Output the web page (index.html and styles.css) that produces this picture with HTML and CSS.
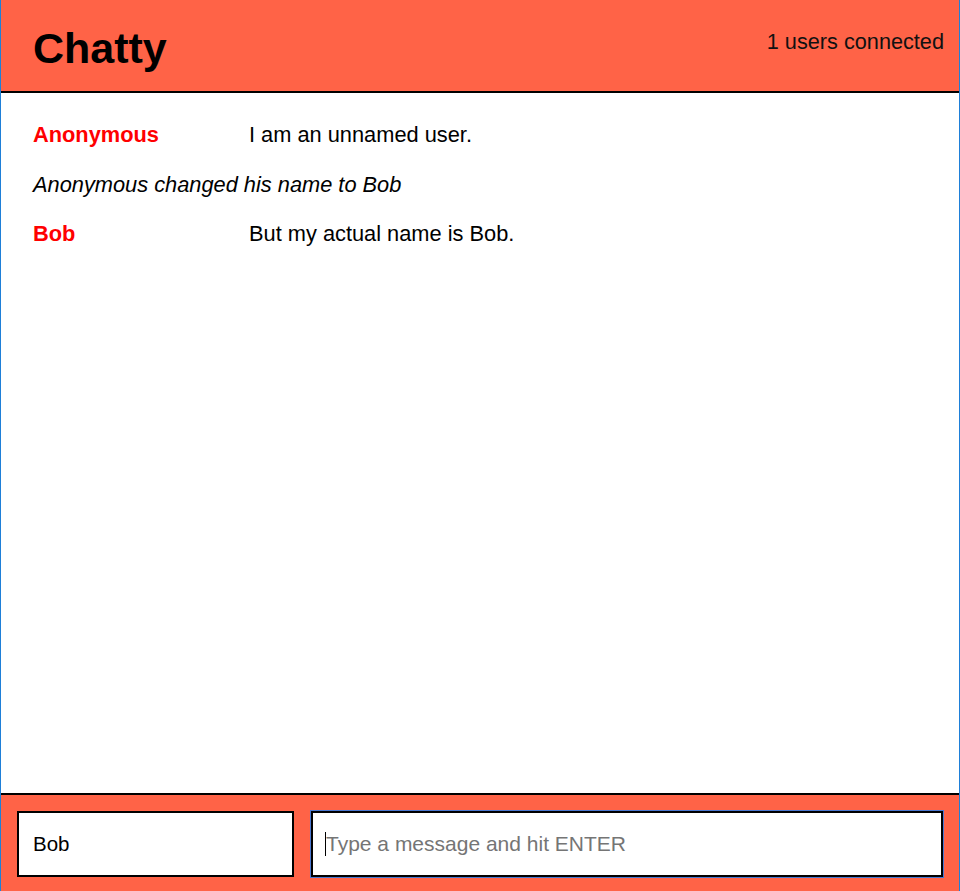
FILE: index.html
```html
<!DOCTYPE html>
<html>
<head>
<meta charset="utf-8">
<title>Chatty</title>
<link rel="stylesheet" href="styles.css">
</head>
<body>
<div class="app">
  <nav class="navbar">
    <span class="brand">Chatty</span>
    <span class="count">1 users connected</span>
  </nav>
  <main class="messages">
    <div class="message">
      <span class="username">Anonymous</span>
      <span class="content">I am an unnamed user.</span>
    </div>
    <div class="message system">Anonymous changed his name to Bob</div>
    <div class="message">
      <span class="username">Bob</span>
      <span class="content">But my actual name is Bob.</span>
    </div>
  </main>
  <footer class="chatbar">
    <input class="chatbar-username" value="Bob">
    <div class="chatbar-message">
      <span class="caret"></span><span class="placeholder">Type a message and hit ENTER</span>
    </div>
  </footer>
</div>
</body>
</html>
```
FILE: styles.css
```css
html, body {
  margin: 0;
  padding: 0;
}
body {
  font-family: "Liberation Sans", Arial, sans-serif;
  background: #fff;
}
.app {
  height: 891px;
  box-sizing: border-box;
  border-left: 1px solid #1e7fd8;
  border-right: 1px solid #1e7fd8;
  display: flex;
  flex-direction: column;
}
.navbar {
  height: 91px;
  background: #ff6347;
  border-bottom: 2px solid #000;
  display: flex;
  justify-content: space-between;
  align-items: center;
  padding: 0 15px 0 32px;
  flex-shrink: 0;
}
.brand {
  font-size: 43px;
  font-weight: bold;
  color: #000;
  margin-top: 6px;
}
.count {
  font-size: 21.7px;
  color: #111;
  align-self: flex-start;
  margin-top: 29px;
}
.messages {
  flex: 1;
  padding: 17px 32px 0;
}
.message {
  display: flex;
  height: 49.5px;
  align-items: flex-start;
  font-size: 21.8px;
  color: #000;
  line-height: 49px;
}
.username {
  width: 216px;
  color: #f00;
  font-weight: bold;
}
.message.system {
  font-style: italic;
}
.chatbar {
  height: 98px;
  box-sizing: border-box;
  background: #ff6347;
  border-top: 2px solid #000;
  display: flex;
  padding: 16px 16px 0 16px;
  gap: 17px;
  flex-shrink: 0;
}
.chatbar-username {
  width: 277px;
  height: 66px;
  box-sizing: border-box;
  border: 2px solid #000;
  padding: 0 14px;
  font-family: "Liberation Sans", Arial, sans-serif;
  font-size: 20.5px;
  color: #000;
  background: #fff;
  outline: none;
  margin: 0;
}
.chatbar-message {
  flex: 1;
  height: 66px;
  box-sizing: border-box;
  border: 2px solid #000;
  outline: 1px solid #4a78d0;
  background: #fff;
  display: flex;
  align-items: center;
  padding-left: 12px;
  font-size: 21px;
  color: #757575;
}
.caret {
  width: 1px;
  height: 24px;
  background: #000;
}
```
